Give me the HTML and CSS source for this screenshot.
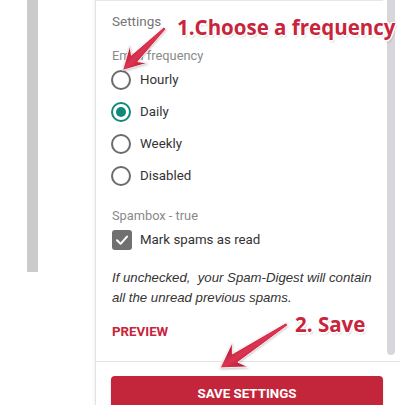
FILE: index.html
```html
<!DOCTYPE html>
<html>
<head>
<meta charset="utf-8">
<link rel="stylesheet" href="styles.css">
</head>
<body>
<div class="page">
  <div class="gutter"><div class="gutter-bar"></div></div>
  <div class="panel">
    <div class="scroll">
      <div class="content">
        <div class="title">Settings</div>
        <div class="group-label">Email frequency</div>
        <div class="radios">
          <div class="radio-row"><span class="radio"></span><span class="label">Hourly</span></div>
          <div class="radio-row"><span class="radio checked"></span><span class="label">Daily</span></div>
          <div class="radio-row"><span class="radio"></span><span class="label">Weekly</span></div>
          <div class="radio-row"><span class="radio"></span><span class="label">Disabled</span></div>
        </div>
        <div class="group-label spam">Spambox - true</div>
        <div class="check-row">
          <span class="checkbox"><svg viewBox="0 0 20 20" width="20" height="20"><polyline points="5,10.3 8.6,13.8 15,6.6" fill="none" stroke="#fff" stroke-width="2" stroke-linecap="round" stroke-linejoin="round"/></svg></span>
          <span class="label">Mark spams as read</span>
        </div>
        <p class="note">If unchecked,&nbsp; your Spam-Digest will contain<br>all the unread previous spams.</p>
        <div class="preview">PREVIEW</div>
      </div>
      <div class="scrollbar"></div>
    </div>
    <div class="footer"><button class="save">SAVE SETTINGS</button></div>
  </div>
</div>

<svg class="arrows" viewBox="0 0 400 405" width="400" height="405">
  <defs>
    <linearGradient id="ag" gradientUnits="userSpaceOnUse" x1="0" y1="-13" x2="0" y2="13">
      <stop offset="0" stop-color="#b01a32"/>
      <stop offset="0.5" stop-color="#dc3450"/>
      <stop offset="1" stop-color="#b01a32"/>
    </linearGradient>
  </defs>
  <g transform="translate(165,28) rotate(135)">
    <polygon points="0,-1.5 43,-4.6 37,-12.5 60,0 37,12.5 43,4.6 0,1.5" fill="url(#ag)" stroke="#fff" stroke-width="0.8" stroke-linejoin="round"/>
  </g>
  <g transform="translate(287,324) rotate(146.7)">
    <polygon points="0,-1.6 62,-5 56,-14.5 80,0 56,14.5 62,5 0,1.6" fill="url(#ag)" stroke="#fff" stroke-width="0.8" stroke-linejoin="round"/>
  </g>
</svg>

<div class="annot annot-1">1.Choose a frequency</div>
<div class="annot annot-2">2. Save</div>
</body>
</html>
```

FILE: styles.css
```css
html, body {
  margin: 0;
  padding: 0;
  background: #fff;
}

body {
  width: 400px;
  height: 405px;
  overflow: hidden;
  position: relative;
  font-family: Roboto, "Liberation Sans", sans-serif;
}

.page {
  display: flex;
  height: 405px;
}

.gutter {
  width: 95px;
  flex: none;
}

.gutter-bar {
  margin-left: 27px;
  width: 11px;
  height: 272px;
  background: #cbcbcb;
}

.panel {
  width: 304px;
  border-left: 1px solid #e3e3e3;
  box-shadow: -1px 0 3px rgba(0, 0, 0, 0.06);
  display: flex;
  flex-direction: column;
}

.scroll {
  height: 361px;
  display: flex;
  flex: none;
}

.content {
  flex: 1;
  border-top: 1px solid #e8e8e8;
  padding-left: 16px;
}

.scrollbar {
  width: 8px;
  height: 355px;
  margin: 0 5px 0 4px;
  background: #d7d7db;
  border-radius: 0 0 4px 4px;
}

.title {
  margin-top: 10px;
  line-height: 20px;
  font-size: 13.5px;
  color: #757575;
}

.group-label {
  margin-top: 17px;
  line-height: 16px;
  font-size: 12.8px;
  color: #8a8a8a;
}

.group-label.spam {
  margin-top: 16px;
}

.radios {
  display: flex;
  flex-direction: column;
}

.radio-row {
  height: 32px;
  display: flex;
  align-items: center;
}

.radio {
  width: 20px;
  height: 20px;
  box-sizing: border-box;
  border: 2px solid #6b6b6b;
  border-radius: 50%;
  margin-left: -1px;
  display: flex;
  align-items: center;
  justify-content: center;
}

.radio.checked {
  border-color: #10897a;
}

.radio.checked::after {
  content: "";
  width: 10px;
  height: 10px;
  border-radius: 50%;
  background: #10897a;
}

.label {
  margin-left: 9px;
  font-size: 13.3px;
  color: #333;
  line-height: 20px;
}

.check-row {
  margin-top: 4px;
  height: 24px;
  display: flex;
  align-items: center;
}

.checkbox {
  width: 20px;
  height: 20px;
  border-radius: 3px;
  background: #707070;
  display: flex;
}

.check-row .label {
  margin-left: 8px;
}

.note {
  margin: 16px 0 0;
  font-family: "Liberation Sans", Arial, sans-serif;
  font-style: italic;
  font-size: 13.2px;
  line-height: 20px;
  color: #333;
}

.preview {
  margin-top: 14px;
  line-height: 20px;
  font-size: 13.3px;
  font-weight: 700;
  color: #c8243c;
}

.footer {
  border-top: 1px solid #e4e4e4;
  padding: 14px 17px 0 15px;
}

.save {
  display: block;
  width: 100%;
  height: 36px;
  border: none;
  border-radius: 4px;
  background: #c3253a;
  color: #fff;
  font-family: Roboto, "Liberation Sans", sans-serif;
  font-weight: 700;
  font-size: 13.3px;
  padding: 0 0 2px;
  box-shadow: 0 1px 2px rgba(0, 0, 0, 0.2);
}

.arrows {
  position: absolute;
  top: 0;
  left: 0;
  pointer-events: none;
  filter: drop-shadow(0 1px 1px rgba(0, 0, 0, 0.25));
}

.annot {
  position: absolute;
  font-family: "Open Sans", "DejaVu Sans", sans-serif;
  font-weight: 700;
  font-size: 20.5px;
  line-height: 24px;
  color: #c8243c;
  white-space: nowrap;
  text-shadow:
    -1.5px 0 #fff, 1.5px 0 #fff, 0 -1.5px #fff, 0 1.5px #fff,
    -1px -1px #fff, 1px -1px #fff, -1px 1px #fff, 1px 1px #fff,
    1px 2px 2px rgba(0, 0, 0, 0.3);
}

.annot-1 {
  top: 15px;
  left: 177px;
}

.annot-2 {
  top: 312px;
  left: 295px;
}
```
